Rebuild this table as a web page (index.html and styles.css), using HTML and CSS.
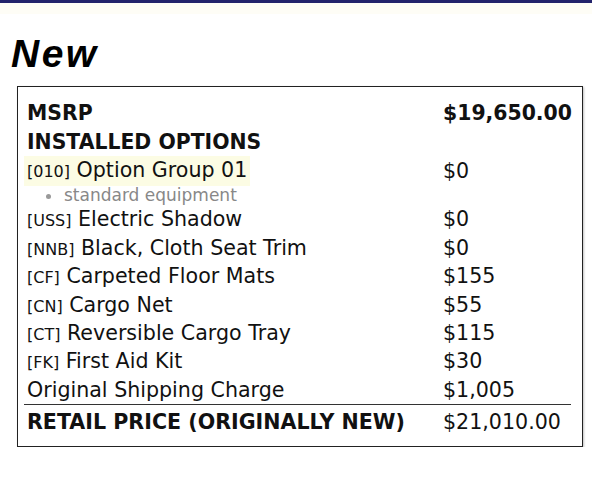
FILE: index.html
```html
<!DOCTYPE html>
<html>
<head>
<meta charset="utf-8">
<link rel="stylesheet" href="styles.css">
</head>
<body>
<div class="topbar"></div>
<div class="band"></div>
<h1 class="title">New</h1>
<div class="sticker">
  <div class="row head"><span class="label">MSRP</span><span class="price">$19,650.00</span></div>
  <div class="row head"><span class="label">INSTALLED OPTIONS</span></div>
  <div class="row"><span class="label hl"><span class="code">[010]</span> Option Group 01</span><span class="price">$0</span></div>
  <ul class="sub"><li>standard equipment</li></ul>
  <div class="row"><span class="label"><span class="code">[USS]</span> Electric Shadow</span><span class="price">$0</span></div>
  <div class="row"><span class="label"><span class="code">[NNB]</span> Black, Cloth Seat Trim</span><span class="price">$0</span></div>
  <div class="row"><span class="label"><span class="code">[CF]</span> Carpeted Floor Mats</span><span class="price">$155</span></div>
  <div class="row"><span class="label"><span class="code">[CN]</span> Cargo Net</span><span class="price">$55</span></div>
  <div class="row"><span class="label"><span class="code">[CT]</span> Reversible Cargo Tray</span><span class="price">$115</span></div>
  <div class="row"><span class="label"><span class="code">[FK]</span> First Aid Kit</span><span class="price">$30</span></div>
  <div class="row"><span class="label">Original Shipping Charge</span><span class="price">$1,005</span></div>
  <div class="row total"><span class="label">RETAIL PRICE (ORIGINALLY NEW)</span><span class="price">$21,010.00</span></div>
</div>
</body>
</html>
```
FILE: styles.css
```css
html, body {
  margin: 0;
  padding: 0;
  background: #ffffff;
}
.topbar {
  height: 3px;
  background: #23236b;
}
.band {
  height: 11px;
  background: #fefdf6;
}
.title {
  margin: 18px 0 0 11px;
  font-family: "Liberation Sans", Arial, sans-serif;
  font-weight: bold;
  font-style: italic;
  font-size: 39px;
  letter-spacing: 2.5px;
  line-height: 44px;
  color: #000;
}
.sticker {
  margin: 10px 0 0 17px;
  width: 566px;
  border: 1px solid #222;
  box-shadow: 1px 1px 2px rgba(0,0,0,0.25);
  padding: 12px 11px 6px 6px;
  box-sizing: border-box;
  font-family: "DejaVu Sans", sans-serif;
  font-size: 20.6px;
  color: #111;
}
.row {
  display: grid;
  grid-template-columns: 416px 1fr;
  height: 28.4px;
  align-items: center;
}
.label {
  padding-left: 3px;
  white-space: nowrap;
}
.hl {
  background: #fcfce4;
  justify-self: start;
  padding-right: 3px;
  line-height: 28px;
}
.head {
  font-weight: bold;
  font-size: 20.4px;
}
.code {
  font-size: 16px;
}
.price {
  padding-left: 3px;
}
.sub {
  margin: 0;
  padding: 1px 0 0 40px;
  list-style: none;
  color: #888;
  font-size: 17px;
  height: 20px;
  line-height: 20px;
  position: relative;
}
.sub li::before {
  content: "";
  position: absolute;
  left: 22px;
  top: 10px;
  width: 5px;
  height: 5px;
  border-radius: 50%;
  background: #999;
}
.total {
  border-top: 1px solid #333;
  height: 35px;
  font-weight: bold;
  font-size: 20.6px;
}
.total .price {
  font-weight: normal;
  font-size: 20.6px;
}
```
